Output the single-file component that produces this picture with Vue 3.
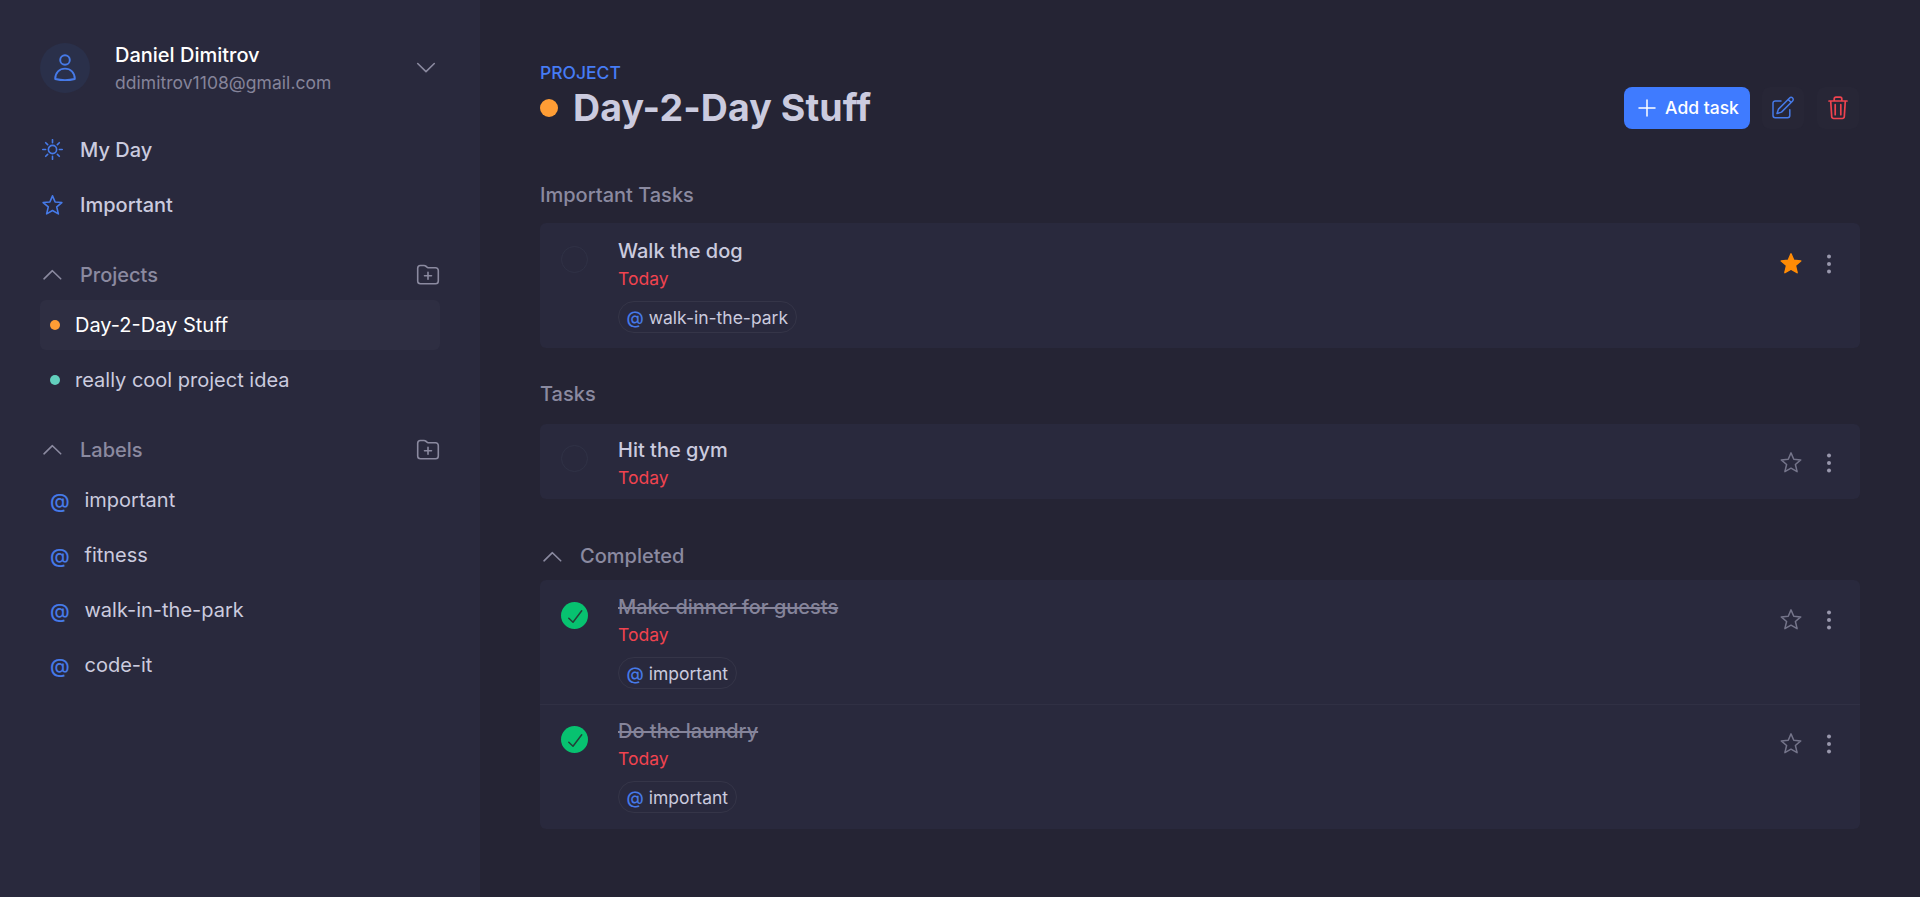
<script setup>
const labels = ['important', 'fitness', 'walk-in-the-park', 'code-it']
const sections = [
  { title: 'Important Tasks', key: 'imp', tasks: [{ name: 'Walk the dog', label: 'walk-in-the-park', starred: true, done: false }] },
  { title: 'Tasks', key: 'open', tasks: [{ name: 'Hit the gym', label: '', starred: false, done: false }] },
  { title: 'Completed', key: 'finished', collapsible: true, tasks: [
    { name: 'Make dinner for guests', label: 'important', starred: false, done: true },
    { name: 'Do the laundry', label: 'important', starred: false, done: true }
  ] }
]
const starPath = 'M12 1.900l2.750 6.400 7 .6-5.350 4.600 1.700 7.200-6.100-3.500-6.100 3.500 1.700-7.200-5.350-4.600 7-.6z'
</script>

<template>
  <div class="app">
    <aside class="sidebar">
      <header class="user">
        <div class="avatar">
          <svg width="24" height="28" viewBox="0 0 24 28"><circle cx="12" cy="6" r="4.800" /><path d="M2.200 25c0-6.500 4.300-10.400 9.800-10.400s9.800 3.900 9.800 10.400c-6 1.400-13.600 1.400-19.600 0z" /></svg>
        </div>
        <div class="user-text">
          <div class="user-name">Daniel Dimitrov</div>
          <div class="user-mail">ddimitrov1108@gmail.com</div>
        </div>
        <svg class="chev" width="20" height="12" viewBox="0 0 20 12"><path d="M1.700 1.500L10 9.600l8.300-8.100" /></svg>
      </header>

      <nav class="main-nav">
        <a class="nav-item">
          <svg class="sun" viewBox="0 0 22 22"><circle cx="11" cy="11" r="4.300" /><path d="M11 .8v3M11 18.200v3M.8 11h3M18.200 11h3M3.900 3.900l2 2M16.100 16.100l2 2M3.900 18.100l2-2M16.100 5.900l2-2" /></svg>
          My Day
        </a>
        <a class="nav-item">
          <svg viewBox="0 0 24 24"><path :d="starPath" /></svg>
          Important
        </a>
      </nav>

      <section class="group">
        <div class="group-head">
          <svg class="chev" width="20" height="12" viewBox="0 0 20 12"><path d="M2 9.800L10.400 1.700l8.300 8.100" /></svg>
          <span>Projects</span>
          <svg class="folder" width="24" height="22" viewBox="0 0 24 22"><path d="M1.700 17V4.200A2.700 2.700 0 0 1 4.400 1.500h3.700c.6 0 1 .15 1.500.5l1.700 1.300c.4.300.9.500 1.500.5h6.800a2.700 2.700 0 0 1 2.700 2.700V17a2.700 2.700 0 0 1-2.700 2.700H4.400A2.700 2.700 0 0 1 1.700 17zM12 8.200v7M8.500 11.700h7" /></svg>
        </div>
        <div class="row active"><i class="dot orange"></i>Day-2-Day Stuff</div>
        <div class="row"><i class="dot teal"></i>really cool project idea</div>
      </section>

      <section class="group">
        <div class="group-head">
          <svg class="chev" width="20" height="12" viewBox="0 0 20 12"><path d="M2 9.800L10.400 1.700l8.300 8.100" /></svg>
          <span>Labels</span>
          <svg class="folder" width="24" height="22" viewBox="0 0 24 22"><path d="M1.700 17V4.200A2.700 2.700 0 0 1 4.400 1.500h3.700c.6 0 1 .15 1.500.5l1.700 1.300c.4.300.9.500 1.500.5h6.800a2.700 2.700 0 0 1 2.700 2.700V17a2.700 2.700 0 0 1-2.700 2.700H4.400A2.700 2.700 0 0 1 1.700 17zM12 8.200v7M8.500 11.700h7" /></svg>
        </div>
        <div v-for="label in labels" :key="label" class="row label"><b>@</b>{{ label }}</div>
      </section>
    </aside>

    <main class="content">
      <header class="page-head">
        <div>
          <div class="eyebrow">PROJECT</div>
          <h1><i class="big-dot"></i>Day-2-Day Stuff</h1>
        </div>
        <div class="actions">
          <button class="add">
            <svg width="18" height="18" viewBox="0 0 18 18"><path d="M9 1v16M1 9h16" /></svg>
            Add task
          </button>
          <button class="tool edit">
            <svg width="24" height="24" viewBox="0 0 24 24"><path d="M10 4.900H4.200A2.200 2.200 0 0 0 2 7.100v12.400a2.200 2.200 0 0 0 2.200 2.200h12.400a2.200 2.200 0 0 0 2.200-2.200V13.700M6 17.600l1.500-4.500L18.600 2a2.100 2.100 0 0 1 3 0 2.100 2.100 0 0 1 0 3L10.500 16.100zM17.200 3.500l2.900 2.900" /></svg>
          </button>
          <button class="tool trash">
            <svg width="22" height="26" viewBox="0 0 22 26"><path d="M2 6h18M3.700 6l1 15.500A2 2 0 0 0 6.800 23.500h8.400a2 2 0 0 0 2.100-2l1-15.500M7.200 6V3.900a1.700 1.700 0 0 1 1.700-1.700h4.200a1.700 1.700 0 0 1 1.700 1.700V6M8.200 9.700v10M13.800 9.700v10" /></svg>
          </button>
        </div>
      </header>

      <section v-for="s in sections" :key="s.key" class="section" :class="s.key">
        <h2>
          <svg v-if="s.collapsible" class="chev" width="20" height="12" viewBox="0 0 20 12"><path d="M2 9.800L10.400 1.700l8.300 8.100" /></svg>
          {{ s.title }}
        </h2>
        <div class="cards">
          <article v-for="t in s.tasks" :key="t.name" class="task" :class="{ done: t.done }">
            <span class="check">
              <svg v-if="t.done" width="16" height="16" viewBox="0 0 16 16"><path d="M1.800 10.200l4.200 4L14.700 2.800" /></svg>
            </span>
            <div class="body">
              <div class="name">{{ t.name }}</div>
              <div class="due">Today</div>
              <div v-if="t.label" class="chip"><b>@</b>{{ t.label }}</div>
            </div>
            <svg class="star" :class="{ on: t.starred }" width="24" height="24" viewBox="0 0 24 24"><path :d="starPath" /></svg>
            <svg class="more" width="6" height="20" viewBox="0 0 6 20"><circle cx="3" cy="2.500" r="2" /><circle cx="3" cy="10" r="2" /><circle cx="3" cy="17.500" r="2" /></svg>
          </article>
        </div>
      </section>
    </main>
  </div>
</template>

<style>
body { margin: 0; background: #252434; }
</style>

<style scoped>
* { box-sizing: border-box; }
.app { display: flex; height: 897px; overflow: hidden; background: #252434; color: #cbcbdf; font: 400 20px/30px Inter, "Liberation Sans", sans-serif; }
svg { flex: none; fill: none; stroke: currentColor; stroke-width: 1.5; stroke-linecap: round; stroke-linejoin: round; }
.sidebar { width: 480px; padding: 40px; background: #29293d; }
.user { display: flex; align-items: center; height: 55px; }
.avatar { width: 50px; height: 50px; border-radius: 50%; background: #2a304a; color: #467ae8; display: flex; align-items: center; justify-content: center; }
.avatar svg { stroke-width: 1.9; }
.user-text { flex: 1; padding: 2px 0 0 25px; }
.user-name { color: #fff; font-weight: 500; line-height: 28px; }
.user-mail { color: #85849a; font-size: 17.5px; line-height: 28px; letter-spacing: .04px; }
.user .chev { margin-right: 4.5px; }
.chev, .folder { color: #8b8aa0; stroke-width: 1.6; }
.main-nav { margin-top: 30px; }
.nav-item { display: flex; align-items: center; gap: 16px; height: 50px; margin-bottom: 5px; font-weight: 500; padding-left: 1px; }
.nav-item svg { width: 23px; height: 23px; color: #467ae8; stroke-width: 1.7; }
.nav-item .sun { width: 21px; height: 21px; margin: 0 1px 1px; }
.group { margin-top: 20px; }
.group-head { display: flex; align-items: center; height: 50px; color: #8b8aa0; font-weight: 500; padding-left: 2px; }
.group-head span { flex: 1; padding-left: 18px; }
.group-head .folder { margin: 0 .5px 1px 0; }
.row { display: flex; align-items: center; height: 50px; margin-bottom: 5px; padding-left: 10px; border-radius: 6px; }
.row.active { background: #2e2e42; color: #fff; }
.dot { width: 10px; height: 10px; margin-right: 15px; border-radius: 50%; }
.orange { background: #ff9d35; }
.teal { background: #62cfbd; }
.label b { color: #467ae8; font-weight: 500; width: 34.5px; padding-top: 1px; }
.content { flex: 1; padding: 59px 60px 0; }
.page-head { display: flex; justify-content: space-between; height: 119px; }
.eyebrow { color: #467cf5; font-size: 17.5px; font-weight: 500; line-height: 28px; }
h1 { display: flex; align-items: center; margin: 0; font-size: 37.5px; font-weight: 700; line-height: 42px; letter-spacing: .1px; }
.big-dot { width: 18px; height: 18px; margin: 0 15px 1px 0; border-radius: 50%; background: #ff9d35; }
.actions { display: flex; align-items: flex-start; padding: 28px 1px 0 0; }
button { display: flex; align-items: center; justify-content: center; border: 0; padding: 0; height: 42px; font: inherit; background: #272636; border-radius: 8px; }
.add { width: 126px; gap: 9px; padding-left: 3px; background: #3f7bff; color: #fff; font-size: 17.5px; font-weight: 500; }
.tool { width: 42px; margin-left: 12px; }
.edit { color: #467ae8; }
.trash { color: #f0434f; margin-left: 13px; }
.trash svg { stroke-width: 1.7; margin-right: 1px; }
h2 { display: flex; align-items: center; margin: 0; height: 45px; color: #8b8aa0; font-size: 20px; font-weight: 500; line-height: 30px; padding-bottom: 11px; }
.open h2 { height: 47px; padding-bottom: 13px; }
.finished h2 { height: 41px; padding-bottom: 7px; }
h2 .chev { margin: 1px 18px 0 2px; }
.imp { height: 199px; }
.open { height: 162px; }
.cards { border-radius: 6px; overflow: hidden; background: #29293d; }
.task { display: flex; align-items: flex-start; height: 124px; padding: 12px 28px 0 21px; }
.imp .task { height: 125px; padding-top: 13px; }
.open .task { height: 75px; padding-top: 11px; }
.task + .task { height: 125px; border-top: 1px solid #303044; padding-top: 11px; }
.check { width: 27px; height: 27px; margin-top: 10px; border: 1px solid #303246; border-radius: 50%; display: flex; align-items: center; justify-content: center; }
.done .check { background: #07c270; border: 0; color: #234138; }
.body { flex: 1; padding-left: 30px; }
.name { font-weight: 500; line-height: 30px; }
.done .name { color: #85849a; text-decoration: line-through; }
.due { color: #f0434f; font-size: 17.5px; line-height: 26px; }
.chip { display: inline-flex; align-items: center; height: 32px; margin-top: 9px; padding: 1px 7.5px 0; border: 1px solid #353548; border-radius: 16px; font-size: 17.5px; line-height: 30px; }
.chip b { color: #467ae8; font-weight: 500; margin-right: 5px; padding-top: 1px; }
.star { margin: 16px 23px 0 0; color: #74748a; }
.star.on { color: #ff8b05; fill: #ff8b05; }
.more { fill: #9998ad; stroke: none; margin-top: 18px; }
</style>
